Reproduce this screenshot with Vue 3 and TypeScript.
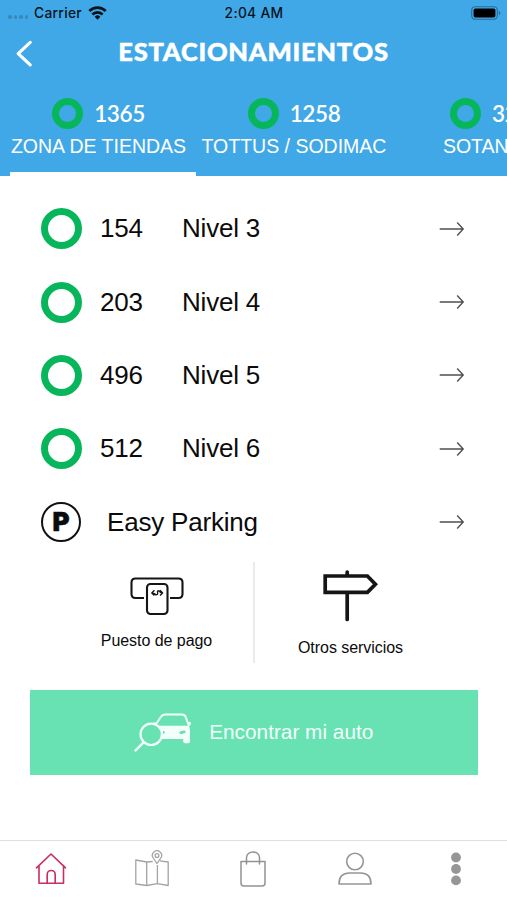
<script setup lang="ts">
interface Zone { count: string; name: string; active: boolean }
interface Level { count: number; name: string }

const zones: Zone[] = [
  { count: '1365', name: 'ZONA DE TIENDAS', active: true },
  { count: '1258', name: 'TOTTUS / SODIMAC', active: false },
  { count: '322', name: 'SOTANO 1', active: false },
]
const levels: Level[] = [
  { count: 154, name: 'Nivel 3' },
  { count: 203, name: 'Nivel 4' },
  { count: 496, name: 'Nivel 5' },
  { count: 512, name: 'Nivel 6' },
]
</script>

<template>
  <div class="screen">
    <header class="header">
      <div class="status">
        <div class="carrier">
          <span class="signal"><i v-for="n in 4" :key="n"></i></span>
          <span class="carrier-name">Carrier</span>
          <svg class="wifi" width="19" height="14" viewBox="0 0 20 15">
            <g fill="none" stroke="#07131c" stroke-width="2.9">
              <path d="M1.2 5.4a12.4 12.4 0 0 1 17.6 0" />
              <path d="M4.5 9.1a7.8 7.8 0 0 1 11 0" />
            </g>
            <path d="M6.9 11.4a4.4 4.4 0 0 1 6.2 0L10 14.6z" fill="#07131c" />
          </svg>
        </div>
        <span class="time">2:04 AM</span>
        <svg class="battery" width="31" height="14" viewBox="0 0 31 14">
          <rect x=".7" y=".7" width="25.6" height="12.6" rx="3.6" fill="none" stroke="#286b96" stroke-width="1.1" />
          <rect x="2.6" y="2.5" width="21.8" height="9" rx="1.8" fill="#000" />
          <path d="M27.8 5v4q1.6-.7 1.6-2t-1.6-2z" fill="#286b96" />
        </svg>
      </div>
      <div class="titlebar">
        <svg class="back" width="18" height="28" viewBox="0 0 18 28">
          <path d="M15.2 2.4 3.2 13.6l12 11.2" fill="none" stroke="#fff" stroke-width="3.2" stroke-linecap="round" stroke-linejoin="round" />
        </svg>
        <h1>ESTACIONAMIENTOS</h1>
      </div>
      <nav class="zones">
        <div v-for="zone in zones" :key="zone.name" class="zone" :class="{ active: zone.active }">
          <div class="zone-top"><span class="ring small"></span><span class="zone-count">{{ zone.count }}</span></div>
          <div class="zone-name">{{ zone.name }}</div>
        </div>
      </nav>
    </header>

    <main>
      <div v-for="level in levels" :key="level.name" class="row">
        <span class="ring"></span>
        <span class="count">{{ level.count }}</span>
        <span class="level">{{ level.name }}</span>
        <svg class="arrow" width="26" height="16" viewBox="0 0 26 16">
          <path d="M.7 8h23.6M18.2 1.5 24.2 8l-6 6.5" fill="none" stroke="#505050" stroke-width="1.4" />
        </svg>
      </div>
      <div class="row">
        <span class="parking">P</span>
        <span class="easy">Easy Parking</span>
        <svg class="arrow" width="26" height="16" viewBox="0 0 26 16">
          <path d="M.7 8h23.6M18.2 1.5 24.2 8l-6 6.5" fill="none" stroke="#505050" stroke-width="1.4" />
        </svg>
      </div>

      <section class="services">
        <div class="service pay">
          <svg width="54" height="38" viewBox="0 0 54 38">
            <g fill="none" stroke="#151515" stroke-width="2.1" stroke-linejoin="round">
              <path d="M14 21H5.5q-4 0-4-4V5.5q0-4 4-4h43q4 0 4 4V17q0 4-4 4H40" />
              <rect x="17" y="7" width="20.5" height="30" rx="3.5" />
              <path d="M24.4 13.2 21.8 16l2.6 2.6M30 13.2l2.6 2.8-2.600 2.600M22 16.300c3.600-.2 3.400 2.400 5.200 1.200 1.700-1.200-1-2.600.8-3.700 1.500-.8 1.600 2.300 4.500 2" stroke-width="1.4" />
            </g>
          </svg>
          <span>Puesto de pago</span>
        </div>
        <div class="divider"></div>
        <div class="service other">
          <svg width="56" height="54" viewBox="0 0 56 54">
            <path d="M2.2 7h42.2l8 8.2-8 8.2H2.2zM24.2 7V3M24.2 24v26.5" fill="none" stroke="#151515" stroke-width="3.7" stroke-linecap="round" stroke-linejoin="miter" />
          </svg>
          <span>Otros servicios</span>
        </div>
      </section>

      <button class="find" type="button">
        <svg width="58" height="39" viewBox="0 0 58 39">
          <path d="M20 14 27 3.8Q28.3 1.5 31 1.5h17q2.5 0 3.6 2.3L55 13" fill="none" stroke="#f2fffa" stroke-width="2" />
          <path d="M22 12.7h33l1 4v11.5q0 2-1.8 2h-3q-2 0-2-2v-2.3H28q2.3-7-3-12zM54 9.2q3-1.3 3 1.2 0 2.2-3 1.5zM19.5 9.3l3.5.4-.5 2.5-4-.8z" fill="#f2fffa" />
          <ellipse cx="48.5" cy="19.2" rx="3.3" ry="1.6" fill="#68e2b3" transform="rotate(-12 48.5 19.2)" />
          <ellipse cx="29.7" cy="19.3" rx=".9" ry="1.5" fill="#68e2b3" />
          <circle cx="17.2" cy="21.3" r="10.7" fill="#68e2b3" stroke="#f2fffa" stroke-width="2.2" />
          <path d="m9.6 29.3-8 8.1" stroke="#f2fffa" stroke-width="2.4" stroke-linecap="round" />
        </svg>
        <span>Encontrar mi auto</span>
      </button>
    </main>

    <footer class="tabs">
      <a>
        <svg width="32" height="36" viewBox="0 0 32 36" fill="none" stroke="#c92e60" stroke-width="1.6" stroke-linejoin="round" stroke-linecap="round">
          <path d="M1.5 16.8 16 3l14.5 13.8M4 14.5v17.800h24.500V14.500M12.200 32V23.500a4 4 0 0 1 8 0V32" />
        </svg>
      </a>
      <a>
        <svg width="36" height="38" viewBox="0 0 36 38" fill="none" stroke="#a4a4a4" stroke-width="1.3" stroke-linejoin="round">
          <path d="M18.7 11.5 12.7 12 1.8 10v24l10.9 1.5 10.7-1.8 10.8 1.8V12l-8.5-1.2M12.7 12v23.5M23.4 15v18.7" />
          <path d="M23 13.5 19.2 8a4.6 4.6 0 1 1 7.6 0z" /><circle cx="23" cy="5.5" r="1.9" />
        </svg>
      </a>
      <a>
        <svg width="28" height="38" viewBox="0 0 28 38" fill="none" stroke="#929292" stroke-width="1.5" stroke-linejoin="round" stroke-linecap="round">
          <path d="M2 11.4h24V33q0 3-3 3H5q-3 0-3-3zM7.5 14V7.5a6.5 5.6 0 0 1 13 0V14" />
        </svg>
      </a>
      <a>
        <svg width="36" height="36" viewBox="0 0 36 36" fill="none" stroke="#969696" stroke-width="1.6" stroke-linejoin="round">
          <circle cx="18" cy="10.5" r="8.3" /><path d="M2 33q0-11 10.5-11h11Q34 22 34 33z" />
        </svg>
      </a>
      <a>
        <svg width="12" height="34" viewBox="0 0 12 34" fill="#969696">
          <circle cx="6" cy="5.5" r="4.9" /><circle cx="6" cy="17" r="4.9" /><circle cx="6" cy="28.4" r="4.9" />
        </svg>
      </a>
    </footer>
  </div>
</template>

<style>
body { background: #fff; overflow: hidden; }
</style>

<style scoped>
* { box-sizing: border-box; }
.screen { width: 507px; height: 900px; display: flex; flex-direction: column; overflow: hidden; background: #fff; font-family: "Liberation Sans", sans-serif; color: #0b0b0b; }
svg { display: block; flex: none; }
.header { height: 176px; flex: none; background: #41a8e8; color: #fff; overflow: hidden; }
.status { height: 26px; display: grid; grid-template-columns: 1fr auto 1fr; align-items: center; padding: 0 7px 0 8px; color: #07131c; font: 500 13.8px/26px Inter, sans-serif; letter-spacing: .3px; }
.carrier { display: flex; align-items: center; }
.signal { display: flex; gap: 2px; width: 26px; padding-top: 8px; }
.signal i { width: 3.5px; height: 3.5px; border-radius: 50%; background: #3789bd; }
.wifi { margin-left: 6px; }
.battery { justify-self: end; margin-right: -2px; }
.titlebar { height: 52px; display: grid; grid-template-columns: 40px 1fr 40px; align-items: center; }
.back { margin-left: 15px; }
h1 { margin: 0; font: 900 25.5px/50px Lato, sans-serif; letter-spacing: .75px; -webkit-text-stroke: .5px #fff; text-align: center; padding-bottom: 6px; white-space: nowrap; }
.zones { display: flex; width: 700px; height: 98px; padding-left: 10px; }
.zone { width: 186px; flex: none; padding-top: 20px; white-space: nowrap; text-align: center; }
.zone:nth-child(2) { width: 205px; padding-right: 9px; }
.zone:nth-child(3) { width: 165px; padding-left: 16px; }
.zone.active { border-bottom: 4px solid #fff; padding-right: 9px; }
.zone-top { display: flex; align-items: center; justify-content: center; gap: 11px; height: 31px; }
.zone:nth-child(3) .zone-top { padding-right: 3px; }
.zone-count { font: 600 22.5px/31px Lato, sans-serif; letter-spacing: -.4px; }
.zone-name { font-size: 19.5px; line-height: 34px; }
.ring { width: 41px; height: 41px; flex: none; border: 7px solid #07b65b; border-radius: 50%; }
.ring.small { width: 31px; height: 31px; border-width: 7.5px; }
main { flex: 1; padding-top: 16px; }
.row { height: 73.4px; display: flex; align-items: center; padding: 0 42px 0 41px; font-size: 26px; letter-spacing: -.2px; }
.count { width: 82px; margin-left: 18px; }
.arrow { margin-left: auto; }
.parking { width: 40px; height: 40px; border: 2px solid #111; border-radius: 50%; display: flex; align-items: center; justify-content: center; font: 900 26px/1 Inter, sans-serif; -webkit-text-stroke: .5px #111; }
.easy { margin-left: 26px; }
.services { display: grid; grid-template-columns: 253px 2px 1fr; height: 101px; margin-top: 3px; font-size: 16px; line-height: 20px; letter-spacing: -.05px; }
.divider { background: #ebebeb; }
.service { display: flex; flex-direction: column; align-items: center; }
.pay { padding: 15px 0 0 60px; gap: 16px; }
.other { padding: 7px 61px 0 0; gap: 15px; }
.find { width: 447.5px; height: 85px; margin: 27px 30px 0; border: 0; padding: 0; background: #68e2b3; color: #f2fffa; display: flex; align-items: center; justify-content: center; gap: 17px; font: 20.8px/26px "Liberation Sans", sans-serif; }
.tabs { height: 60px; flex: none; display: grid; grid-template-columns: repeat(5, 1fr); border-top: 1px solid #e0e0e0; }
.tabs a { display: flex; justify-content: center; align-items: center; height: 55px; }
</style>
